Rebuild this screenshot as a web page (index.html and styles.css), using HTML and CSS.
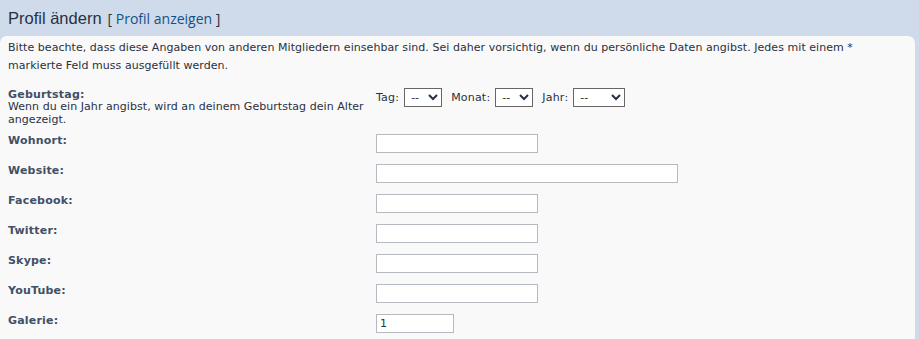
FILE: index.html
```html
<!DOCTYPE html>
<html lang="de">
<head>
<meta charset="UTF-8" />
<title>Profil ändern</title>
<link rel="stylesheet" href="styles.css">
</head>
<body>

<div class="page">
  <h2 class="title">Profil ändern <span class="sub">[ <a href="#">Profil anzeigen</a> ]</span></h2>

  <div class="panel">
    <p class="intro">Bitte beachte, dass diese Angaben von anderen Mitgliedern einsehbar sind. Sei daher vorsichtig, wenn du persönliche Daten angibst. Jedes mit einem * markierte Feld muss ausgefüllt werden.</p>

    <dl class="row row-birthday">
      <dt>
        <label>Geburtstag:</label>
        <span class="explain">Wenn du ein Jahr angibst, wird an deinem Geburtstag dein Alter angezeigt.</span>
      </dt>
      <dd class="dates">
        <label>Tag: <select class="sel-short"><option>--</option></select></label>
        <label>Monat: <select class="sel-short"><option>--</option></select></label>
        <label>Jahr: <select class="sel-year"><option>--</option></select></label>
      </dd>
    </dl>

    <dl class="row">
      <dt><label>Wohnort:</label></dt>
      <dd><input type="text" class="inputbox" /></dd>
    </dl>
    <dl class="row">
      <dt><label>Website:</label></dt>
      <dd><input type="text" class="inputbox wide" /></dd>
    </dl>
    <dl class="row">
      <dt><label>Facebook:</label></dt>
      <dd><input type="text" class="inputbox" /></dd>
    </dl>
    <dl class="row">
      <dt><label>Twitter:</label></dt>
      <dd><input type="text" class="inputbox" /></dd>
    </dl>
    <dl class="row">
      <dt><label>Skype:</label></dt>
      <dd><input type="text" class="inputbox" /></dd>
    </dl>
    <dl class="row">
      <dt><label>YouTube:</label></dt>
      <dd><input type="text" class="inputbox" /></dd>
    </dl>
    <dl class="row">
      <dt><label>Galerie:</label></dt>
      <dd><input type="text" class="inputbox tiny" value="1" /></dd>
    </dl>
  </div>
</div>

</body>
</html>
```

FILE: styles.css
```css
body {
  margin: 0;
  background: #cfdaea;
  font-family: 'DejaVu Sans', Verdana, sans-serif;
  font-size: 11px;
  color: #28313f;
}
.page {
  padding-right: 4px;
  height: 339px;
  overflow: hidden;
}
.title {
  margin: 0;
  height: 36px;
  padding: 0 8px;
  display: flex;
  align-items: center;
  gap: 6px;
  font-family: 'Liberation Sans', Arial, sans-serif;
  font-weight: normal;
  font-size: 16.5px;
  color: #28313f;
}
.title .sub {
  font-family: 'Open Sans', sans-serif;
  font-size: 14px;
  padding-top: 1px;
}
.title a {
  color: #105289;
  text-decoration: none;
}
.panel {
  background: #f9f9f9;
  border-radius: 7px 7px 0 0;
  padding: 3px 8px 8px;
  min-height: 300px;
}
.intro {
  margin: 0 0 13px;
  line-height: 18px;
  max-width: 860px;
  letter-spacing: 0.05px;
}
.row {
  display: grid;
  grid-template-columns: 368px 1fr;
  margin: 0 0 11px;
}
.row-birthday {
  margin-bottom: 8px;
}
.row dt, .row dd {
  margin: 0;
}
.row dt label {
  display: block;
  font-weight: bold;
  color: #425067;
  line-height: 13px;
  letter-spacing: 0.2px;
}
.explain {
  display: block;
  line-height: 12.6px;
  letter-spacing: 0.05px;
}
.dates {
  display: flex;
  align-items: flex-start;
  gap: 9px;
}
.dates label {
  display: flex;
  align-items: center;
  gap: 5px;
  line-height: 19px;
  letter-spacing: 0.2px;
}
select {
  height: 19px;
  border: 1px solid #666;
  background: #fff;
  font-family: inherit;
  font-size: 11px;
  color: #28313f;
  padding: 0 2px;
}
.sel-short {
  width: 38px;
}
.sel-year {
  width: 52px;
}
.inputbox {
  box-sizing: border-box;
  display: block;
  width: 162px;
  height: 19px;
  border: 1px solid #b4bac0;
  background: #fff;
  font-family: inherit;
  font-size: 11px;
  color: #28313f;
  padding: 0 3px;
}
.inputbox.wide {
  width: 302px;
}
.inputbox.tiny {
  width: 78px;
}
```
